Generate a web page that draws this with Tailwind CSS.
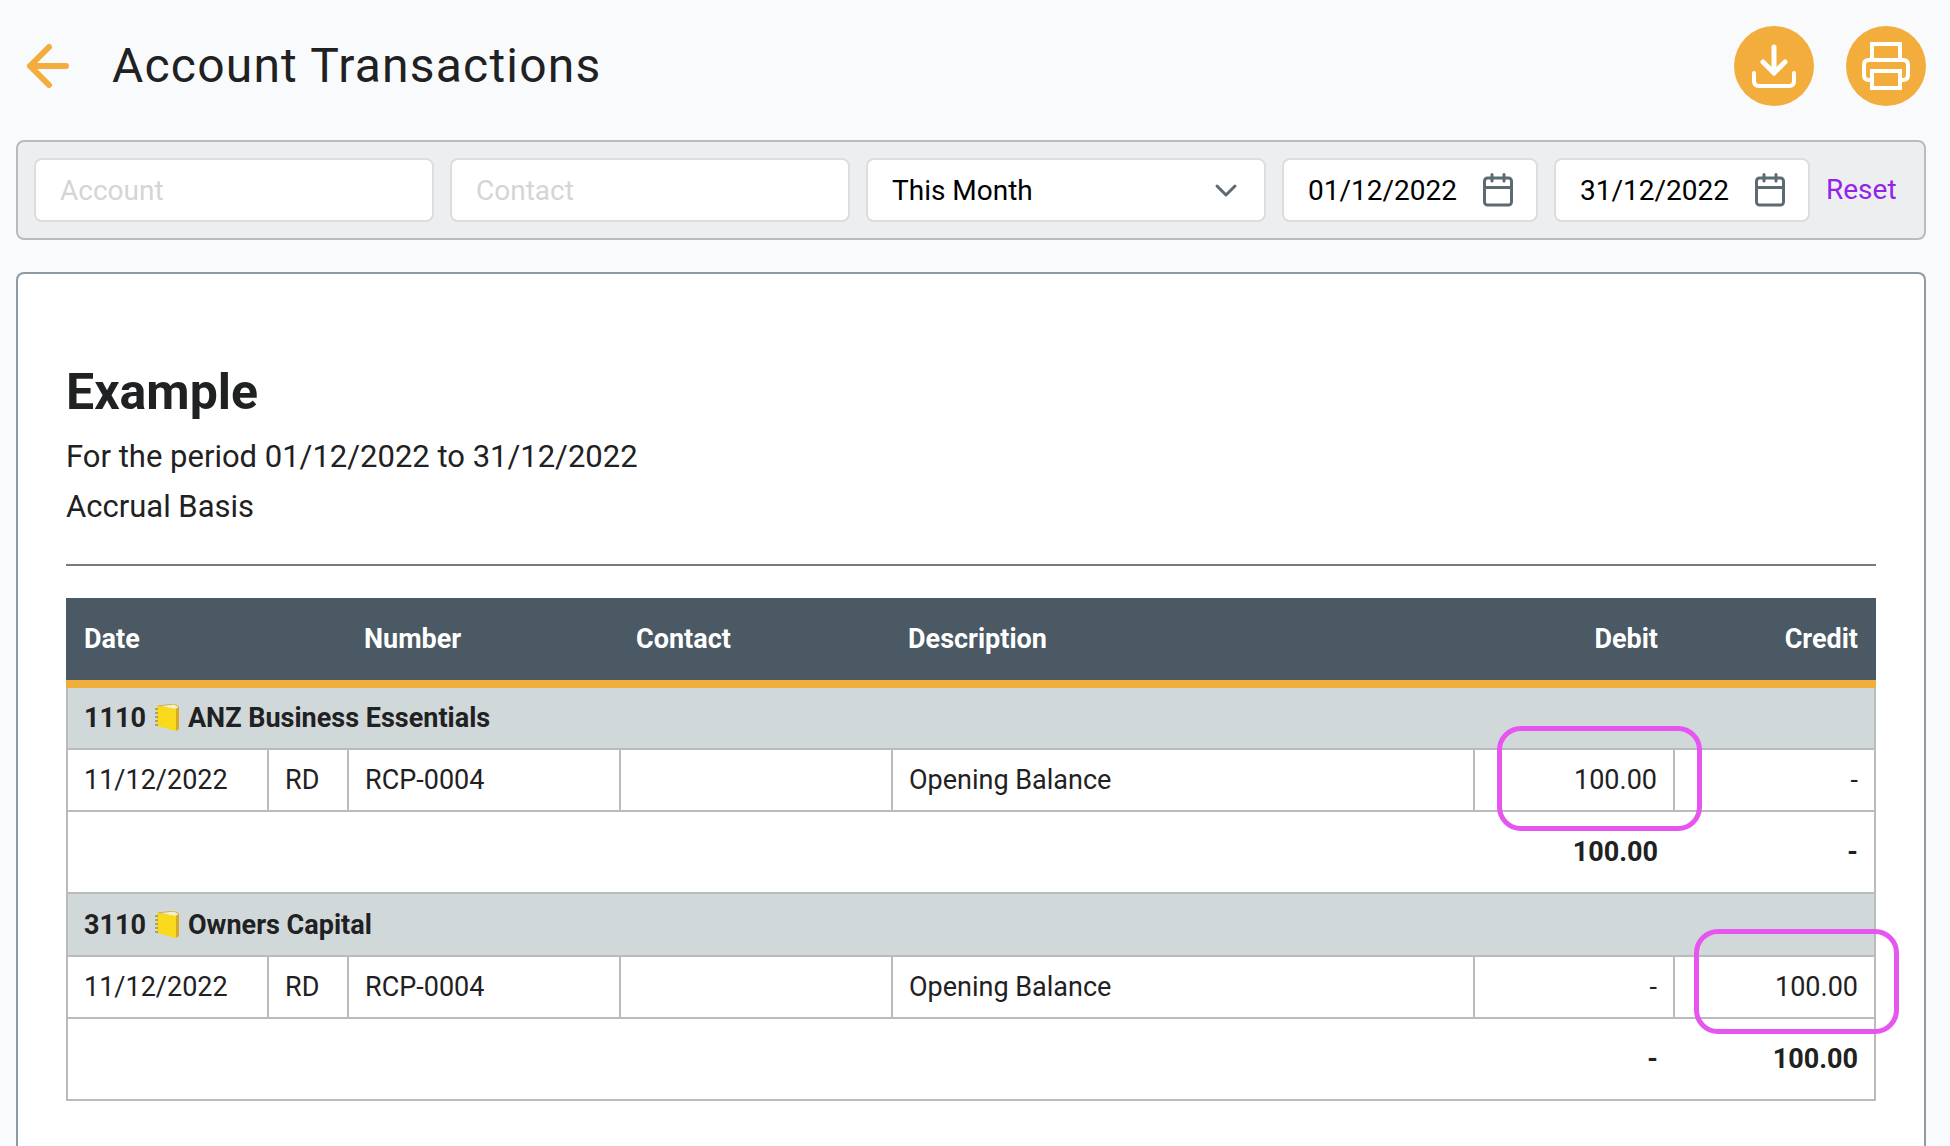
<!DOCTYPE html>
<html lang="en">
<head>
<meta charset="utf-8">
<title>Account Transactions</title>
<script src="https://cdn.jsdelivr.net/npm/@tailwindcss/browser@4"></script>
</head>
<body class="flex min-h-screen flex-col bg-[#f9fafc] pl-4 pr-6 font-[Roboto,sans-serif] text-[28px] leading-10 text-[#1f2122]">
  <svg class="hidden" aria-hidden="true">
    <symbol id="calendar" viewBox="0 0 30 34" fill="none" stroke="#5c6b73" stroke-width="3" stroke-linecap="round">
      <rect x="1.5" y="5" width="27" height="27" rx="3"/>
      <path d="M1.5 14.5H28.5M9 1.5V8M21 1.5V8"/>
    </symbol>
    <symbol id="ledger" viewBox="0 0 26 28">
      <path d="M4 2L20 0L25 3L22 6Z" fill="#f5efc9" stroke="#cdb24a" stroke-width="1"/>
      <path d="M21 5L25 3V25L22 27Z" fill="#d4ac28"/>
      <path d="M3 2L22 5V27L3 22Z" fill="#f8d91b"/>
      <path d="M1 5H4M1 9H4M1 13H4M1 17H4M1 21H4" stroke="#7a6a35" stroke-width="1"/>
    </symbol>
  </svg>

  <header class="flex h-[132px] items-center pl-2">
    <a href="#" aria-label="Back" class="flex w-12 justify-center">
      <svg class="size-12" viewBox="0 0 48 48" fill="none" stroke="#f3ad3c" stroke-width="6" stroke-linecap="round" stroke-linejoin="round"><path d="M25 5L6 24L25 43M6 24H42"/></svg>
    </a>
    <h1 class="pl-10 text-5xl tracking-wide">Account Transactions</h1>
    <div class="ml-auto flex gap-8">
      <button aria-label="Download" class="flex size-20 items-center justify-center rounded-full bg-[#f3ad3c]">
        <svg class="size-12" viewBox="0 0 48 48" fill="none" stroke="white" stroke-width="4" stroke-linecap="round" stroke-linejoin="round"><path stroke-width="5" d="M24 5V31M13 20L24 31L35 20"/><path d="M4 31V39Q4 44 9 44H39Q44 44 44 39V31"/></svg>
      </button>
      <button aria-label="Print" class="flex size-20 items-center justify-center rounded-full bg-[#f3ad3c]">
        <svg class="size-12" viewBox="0 0 48 48" fill="none" stroke="white" stroke-width="4"><path d="M10 18V2H38V18M10 38H7Q2 38 2 33V23Q2 18 7 18H41Q46 18 46 23V33Q46 38 41 38H38M10 29H38V46H10Z"/></svg>
      </button>
    </div>
  </header>

  <form class="mt-2 flex items-center gap-4 rounded-lg border-2 border-[#b9bcbe] bg-[#edeef0] p-4 text-black">
    <input aria-label="Account" placeholder="Account" class="h-16 w-[400px] min-w-0 rounded-lg border-2 border-[#dcdddf] bg-white px-6 placeholder:text-[#d3d5d8]">
    <input aria-label="Contact" placeholder="Contact" class="h-16 w-[400px] min-w-0 rounded-lg border-2 border-[#dcdddf] bg-white px-6 placeholder:text-[#d3d5d8]">
    <div class="relative w-[400px] min-w-0">
      <select aria-label="Period" class="h-16 w-full appearance-none rounded-lg border-2 border-[#dcdddf] bg-white px-6 pt-px"><option>This Month</option></select>
      <svg class="pointer-events-none absolute top-6 right-7 h-4 w-6" viewBox="0 0 24 16" fill="none" stroke="#5c6b73" stroke-width="3" stroke-linecap="round" stroke-linejoin="round"><path d="M3 4L12 13L21 4"/></svg>
    </div>
    <div class="relative w-64">
      <input aria-label="From date" value="01/12/2022" class="h-16 w-full rounded-lg border-2 border-[#dcdddf] bg-white px-6">
      <svg class="pointer-events-none absolute top-[15px] right-[25px] h-[34px] w-[30px]"><use href="#calendar"/></svg>
    </div>
    <div class="relative w-64">
      <input aria-label="To date" value="31/12/2022" class="h-16 w-full rounded-lg border-2 border-[#dcdddf] bg-white px-6">
      <svg class="pointer-events-none absolute top-[15px] right-[25px] h-[34px] w-[30px]"><use href="#calendar"/></svg>
    </div>
    <button type="reset" class="text-[#9323ea]">Reset</button>
  </form>

  <main class="mt-8 grow rounded-t-lg border-2 border-b-0 border-[#8f9ba2] bg-white px-12 pt-[86px]">
    <h2 class="text-[50px] leading-[64px] font-bold">Example</h2>
    <p class="mt-2 text-[31px] leading-[50px]">For the period 01/12/2022 to 31/12/2022</p>
    <p class="text-[31px] leading-[50px]">Accrual Basis</p>
    <hr class="my-8 border-t-2 border-[#77797a]">
    <table class="w-full table-fixed border-collapse text-[27px]">
      <colgroup>
        <col class="w-[201px]"><col class="w-20"><col class="w-[272px]"><col class="w-[272px]"><col><col class="w-[200px]"><col class="w-[201px]">
      </colgroup>
      <thead class="border-x-2 border-[#4a5963]">
        <tr class="h-[86px] border-b-8 border-b-[#f0ae3b] bg-[#4a5963] text-left text-white">
          <th colspan="2" class="px-4">Date</th>
          <th class="px-4">Number</th>
          <th class="px-4">Contact</th>
          <th class="px-4">Description</th>
          <th class="px-4 text-right">Debit</th>
          <th class="px-4 text-right">Credit</th>
        </tr>
      </thead>
      <tbody>
        <tr class="h-[65px] bg-[#d1d8da] text-left">
          <th colspan="7" class="border-2 border-t-0 border-[#b9bbbc] px-4"><span class="flex items-center gap-2">1110 <svg class="h-7 w-[26px]" aria-hidden="true"><use href="#ledger"/></svg> ANZ Business Essentials</span></th>
        </tr>
        <tr class="h-[62px]">
          <td class="border-2 border-[#b9bbbc] px-4">11/12/2022</td>
          <td class="border-2 border-[#b9bbbc] px-4">RD</td>
          <td class="border-2 border-[#b9bbbc] px-4">RCP-0004</td>
          <td class="border-2 border-[#b9bbbc] px-4"></td>
          <td class="border-2 border-[#b9bbbc] px-4">Opening Balance</td>
          <td class="relative border-2 border-[#b9bbbc] px-4 text-right">100.00<span class="absolute top-[-24px] right-[-29px] h-[105px] w-[205px] rounded-3xl border-[5px] border-[#e755f0]"></span></td>
          <td class="border-2 border-[#b9bbbc] px-4 text-right">-</td>
        </tr>
        <tr class="h-[82px] border-2 border-[#b9bbbc] text-right font-bold">
          <td colspan="5"></td>
          <td class="px-4">100.00</td>
          <td class="px-4">-</td>
        </tr>
        <tr class="h-[63px] bg-[#d1d8da] text-left">
          <th colspan="7" class="border-2 border-[#b9bbbc] px-4"><span class="flex items-center gap-2">3110 <svg class="h-7 w-[26px]" aria-hidden="true"><use href="#ledger"/></svg> Owners Capital</span></th>
        </tr>
        <tr class="h-[62px]">
          <td class="border-2 border-[#b9bbbc] px-4">11/12/2022</td>
          <td class="border-2 border-[#b9bbbc] px-4">RD</td>
          <td class="border-2 border-[#b9bbbc] px-4">RCP-0004</td>
          <td class="border-2 border-[#b9bbbc] px-4"></td>
          <td class="border-2 border-[#b9bbbc] px-4">Opening Balance</td>
          <td class="border-2 border-[#b9bbbc] px-4 text-right">-</td>
          <td class="relative border-2 border-[#b9bbbc] px-4 text-right">100.00<span class="absolute top-[-28px] right-[-25px] h-[105px] w-[205px] rounded-3xl border-[5px] border-[#e755f0]"></span></td>
        </tr>
        <tr class="h-[82px] border-2 border-[#b9bbbc] text-right font-bold">
          <td colspan="5"></td>
          <td class="px-4">-</td>
          <td class="px-4">100.00</td>
        </tr>
      </tbody>
    </table>
  </main>
</body>
</html>
